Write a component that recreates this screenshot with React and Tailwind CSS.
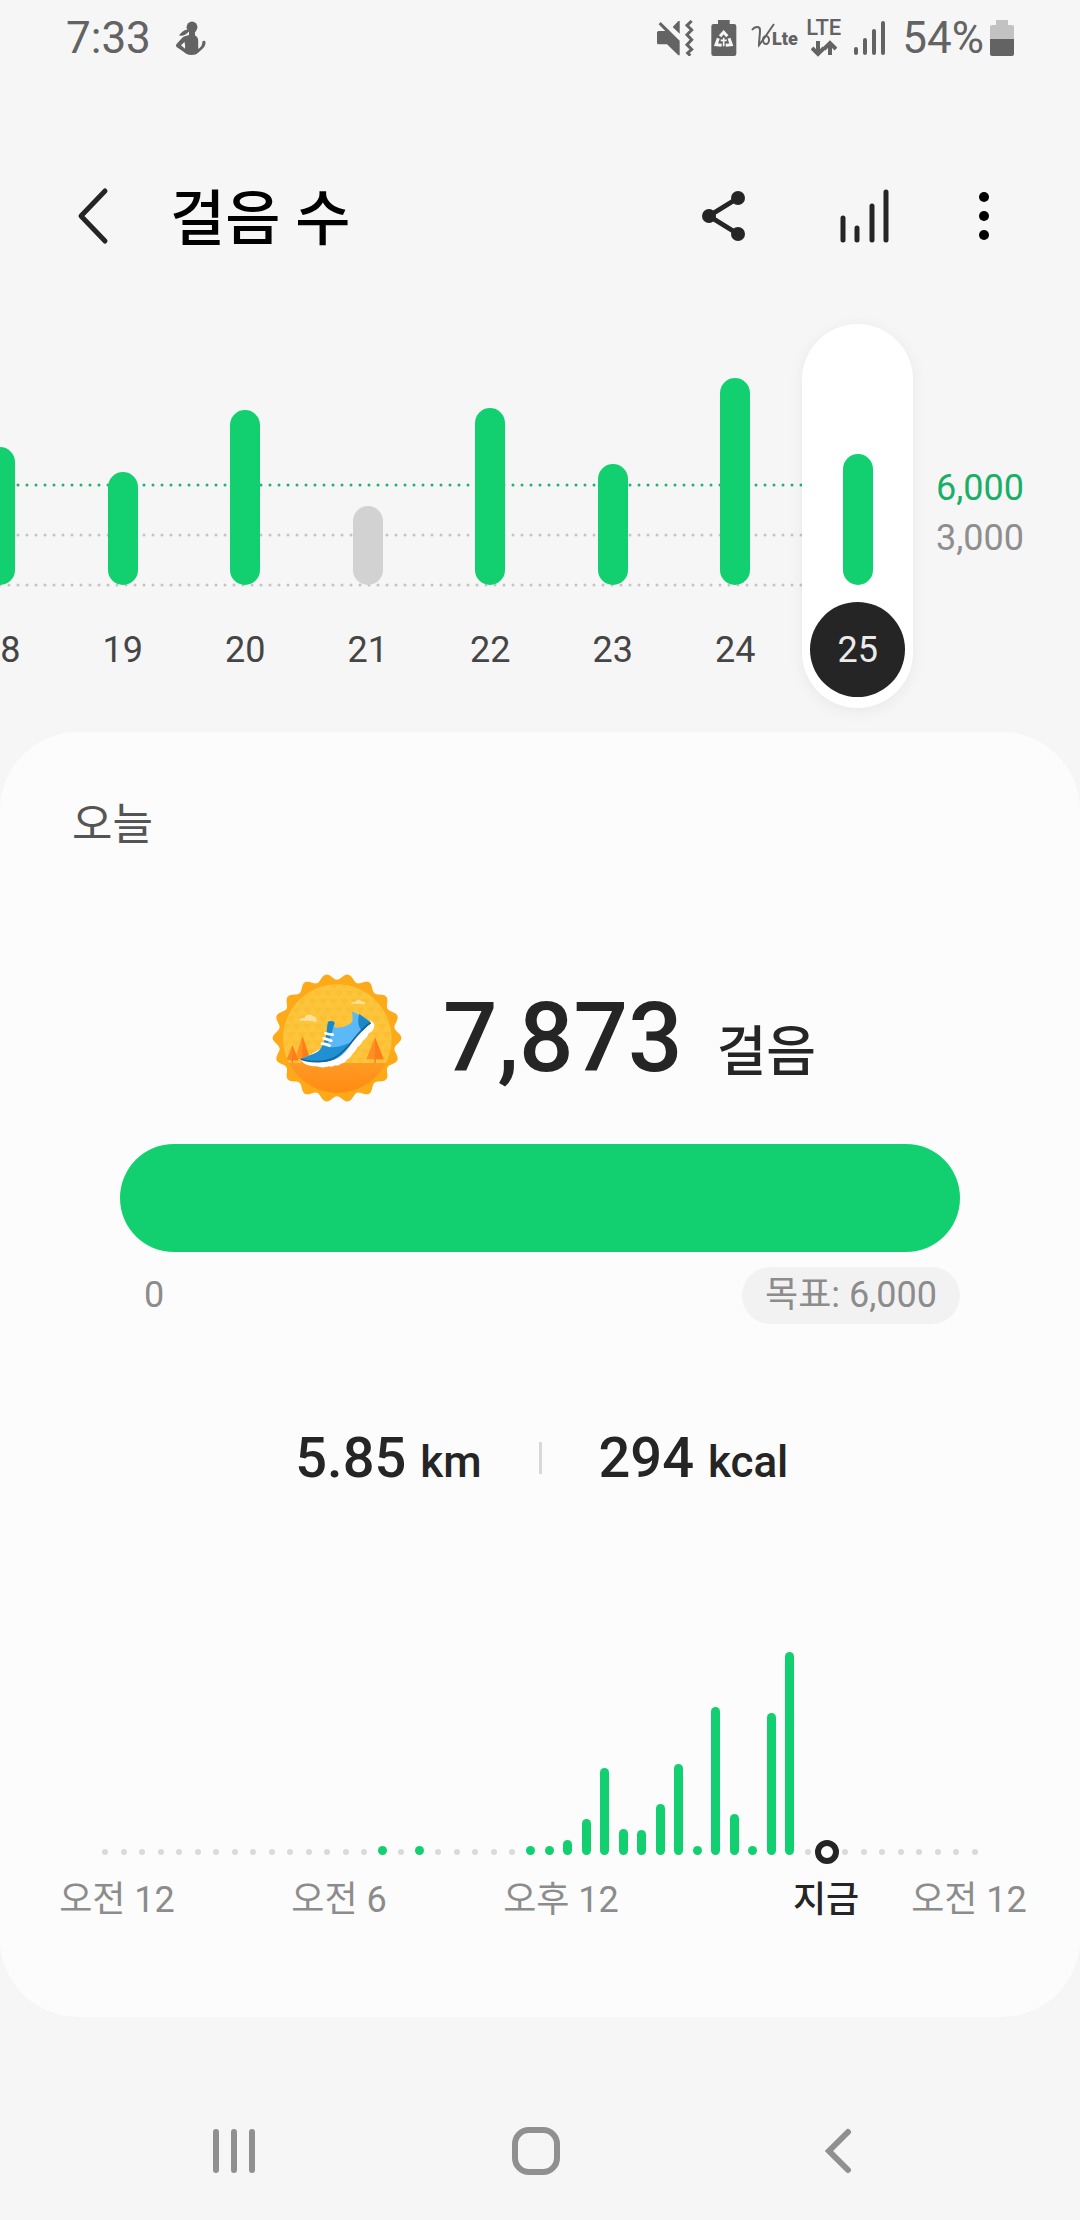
import clsx from "clsx";

const days = [
  { day: 18, height: 138, reached: true },
  { day: 19, height: 113, reached: true },
  { day: 20, height: 175, reached: true },
  { day: 21, height: 79, reached: false },
  { day: 22, height: 177, reached: true },
  { day: 23, height: 121, reached: true },
  { day: 24, height: 207, reached: true },
  { day: 25, height: 131, reached: true },
];
const selectedDay = 25;

// one slot per half hour, only the slots with steps are listed
const slotHeights = {
  15: 9,
  17: 9,
  23: 9,
  24: 9,
  25: 15,
  26: 36,
  27: 87,
  28: 26,
  29: 25,
  30: 51,
  31: 91,
  32: 9,
  33: 148,
  34: 41,
  35: 9,
  36: 142,
  37: 203,
};
const nowSlot = 39;
const slots = Array.from({ length: 48 }, (_, i) => i);

const StatusBar = () => (
  <div className="h-[76px] px-[66px] flex items-center justify-between text-[#636363] text-[44px] leading-none">
    <div className="flex items-center gap-6">
      <span>7:33</span>
      <svg width="32" height="34" viewBox="0 0 32 34" fill="currentColor">
        <ellipse cx="17" cy="6.2" rx="5.4" ry="5.6" />
        <path d="M13 8.500C8 9 6 12 4 14.600c4 .6 8-1 10-4.600z" />
        <path
          fillRule="evenodd"
          d="M14 9h6v5.500c2 1 3.200 2.500 3.200 5V28c2.300-1.500 3.800-3.300 4-5.500l.2-2c.8-1.300 3-1 3.100.5.100 5.500-4 7.500-6 9.500-2 2.500-4.500 3.500-8 3.500-4 0-6-1.200-8-3.200L1.600 26c-.8-1-.8-2 0-3L7 17c2-2 5-2.500 7-3zM9.500 21 6 24.200l4 3.600c.2-2.500.2-4.500-.5-6.800z"
        />
      </svg>
    </div>
    <div className="flex items-center">
      <svg width="37" height="36" viewBox="18 32 111 108" fill="currentColor">
        <path d="M18 70q0-5 5-5h20L23 45l6-7 57 56v44h-4L48 105H23q-5 0-5-5z" />
        <path d="M65 53 82 35h4v38z" />
        <path
          d="m122 35-14 13 14 14-14 14 14 15-14 15 14 14-12 11 8 8"
          fill="none"
          stroke="currentColor"
          strokeWidth="9"
        />
      </svg>
      <svg
        className="ml-[17px]"
        width="26"
        height="36"
        viewBox="181 33 78 108"
        fill="currentColor"
      >
        <path d="M202 33h35v12h13q7 0 7 7v82q0 7-7 7h-61q-7 0-7-7V52q0-7 7-7h13z" />
        <g fill="none" stroke="#f6f6f6" strokeWidth="9">
          <path d="m208 82 11-12 11 12M203 88l-7 19 17 2M235 88l7 19-17 2" />
          <path d="M219 86v26M210 94h18" strokeWidth="5" />
        </g>
      </svg>
      <svg className="ml-[14px]" width="53" height="30" fill="currentColor">
        <path
          d="M1 7c3-4 8-4 8 0 0 5-1 11-1 15C13 16 18 8 23 1"
          fill="none"
          stroke="currentColor"
          strokeWidth="2"
        />
        <ellipse
          cx="15"
          cy="17"
          rx="3"
          ry="4"
          fill="none"
          stroke="currentColor"
          strokeWidth="2"
        />
        <text x="21" y="22" fontSize="18" fontWeight="900">
          Lte
        </text>
      </svg>
      <div className="ml-[2px] flex flex-col items-center gap-1">
        <span className="text-[22px] leading-4 font-medium">LTE</span>
        <svg
          width="26"
          height="17"
          fill="none"
          stroke="currentColor"
          strokeWidth="4"
        >
          <path d="M7 1v13M1 8l6 6 6-6M19 15V3M13 9l6-6 6 6" />
        </svg>
      </div>
      <svg
        className="ml-[13px]"
        width="32"
        height="34"
        stroke="currentColor"
        strokeWidth="4"
        strokeLinecap="round"
      >
        <path d="M2 28v4M11 19v13M20 10v22M29 2v30" />
      </svg>
      <span className="ml-4">54%</span>
      <svg className="ml-[6px]" width="24" height="36">
        <path d="M6 0h12v5h4q2 0 2 2v12H0V7q0-2 2-2h4z" fill="#c2c2c2" />
        <path d="M0 19h24v15q0 2-2 2H2q-2 0-2-2z" fill="currentColor" />
      </svg>
    </div>
  </div>
);

const Header = () => (
  <header className="mt-20 h-[120px] pl-[77px] pr-[86px] flex items-center text-[#252525]">
    <button aria-label="뒤로">
      <svg
        width="32"
        height="58"
        fill="none"
        stroke="currentColor"
        strokeWidth="5"
        strokeLinecap="round"
        strokeLinejoin="round"
      >
        <path d="M28 4 4 29l24 25" />
      </svg>
    </button>
    <h1 className="ml-[61px] pt-2 flex-1 text-[60px] leading-none font-medium text-black">
      걸음 수
    </h1>
    <button aria-label="공유">
      <svg width="44" height="50" fill="currentColor">
        <path
          d="M36 7 7 25l29 18"
          fill="none"
          stroke="currentColor"
          strokeWidth="5"
        />
        <circle cx="36" cy="7" r="7" />
        <circle cx="7" cy="25" r="7" />
        <circle cx="36" cy="43" r="7" />
      </svg>
    </button>
    <button aria-label="차트" className="ml-[94px]">
      <svg
        width="50"
        height="54"
        stroke="currentColor"
        strokeWidth="5"
        strokeLinecap="round"
      >
        <path d="M3 29v22M17 39v12M32 17v34M46 3v48" />
      </svg>
    </button>
    <button aria-label="더보기" className="ml-[84px]">
      <svg width="20" height="50" fill="#000">
        <circle cx="10" cy="6" r="5" />
        <circle cx="10" cy="25" r="5" />
        <circle cx="10" cy="44" r="5" />
      </svg>
    </button>
  </header>
);

const WeekChart = () => (
  <section className="relative mt-12 h-[384px] flex overflow-x-clip text-[36px] leading-none">
    <svg className="absolute inset-0 w-full h-full">
      <g strokeWidth="3" strokeLinecap="round" strokeDasharray="0 9">
        <line x1="0" x2="810" y1="161" y2="161" stroke="#1fb36b" />
        <line x1="0" x2="810" y1="211" y2="211" stroke="#c4c4c4" />
        <line x1="0" x2="810" y1="261" y2="261" stroke="#c4c4c4" />
      </g>
    </svg>
    <div className="relative -ml-[61px] flex-1 grid grid-cols-8 justify-items-center">
      {days.map(({ day, height, reached }) => (
        <button
          key={day}
          className={clsx(
            "w-[111px] h-[384px] pb-[11px] flex flex-col items-center justify-end gap-[17px] rounded-full",
            day === selectedDay && "bg-white shadow-[0_3px_16px_rgba(0,0,0,0.06)]"
          )}
        >
          <span
            className={clsx(
              "w-[30px] rounded-full",
              reached ? "bg-[#12d070]" : "bg-[#d2d2d2]"
            )}
            style={{ height }}
          />
          <span
            className={clsx(
              "size-[95px] rounded-full flex items-center justify-center",
              day === selectedDay
                ? "bg-[#252525] text-[#ebebeb]"
                : "text-[#454545]"
            )}
          >
            {day}
          </span>
        </button>
      ))}
    </div>
    <div className="w-[161px] pt-[139px] pr-[56px] flex flex-col items-end leading-[50px]">
      <span className="text-[#1aaf66]">6,000</span>
      <span className="text-[#8e8e8e]">3,000</span>
    </div>
  </section>
);

// 18 scallops round the rim
const rimPoints = Array.from({ length: 361 }, (_, deg) => {
  const a = (deg * Math.PI) / 180;
  const r = 184 + 9 * Math.cos(18 * a);
  return `${(218 + r * Math.cos(a)).toFixed(1)},${(221 + r * Math.sin(a)).toFixed(1)}`;
}).join(" ");

const Badge = () => (
  <svg width="130" height="130" viewBox="23 26 390 390">
    <defs>
      <clipPath id="badge-face">
        <circle cx="219" cy="223" r="163" />
      </clipPath>
      <pattern
        id="badge-triangles"
        width="32"
        height="50"
        patternUnits="userSpaceOnUse"
      >
        <path d="M2 4h28L16 25zM-14 29h28L0 50zM18 29h28L32 50z" fill="#fbbd2c" />
      </pattern>
      <linearGradient id="badge-ground" x1="0" y1="0" x2="0" y2="1">
        <stop offset="0" stopColor="#ff9a24" />
        <stop offset="1" stopColor="#ff8a10" />
      </linearGradient>
    </defs>
    <polygon points={rimPoints} fill="#fea917" />
    <circle cx="219" cy="223" r="164" fill="#f7a21c" />
    <g clipPath="url(#badge-face)">
      <rect x="50" y="50" width="340" height="345" fill="#fcc53c" />
      <rect
        x="50"
        y="50"
        width="340"
        height="250"
        fill="url(#badge-triangles)"
        opacity="0.7"
      />
      <path
        d="M107 170c-2-8 6-10 13-8 2-11 20-14 26-6 10-2 12 8 10 18-15-5-35-5-49-4z"
        fill="#fee196"
      />
      <path
        d="M260 119c2-6 8-7 12-5 3-10 16-10 18-2 8-1 12 3 15 8-15-2-30-2-45-1z"
        fill="#fee196"
      />
      <path d="m84 242 18 46H66z" fill="#ff8a24" />
      <path d="m114 215 24 70H92z" fill="#ff9324" />
      <path d="m114 215 24 70h-24zM84 242l18 46H84z" fill="#ff7d18" />
      <path d="m332 219 26 66h-52z" fill="#ff8f24" />
      <path d="m332 219 26 66h-26z" fill="#ff7d18" />
      <path d="M82 284h4v16h-4zM112 284h4v16h-4zM330 284h4v16h-4z" fill="#f37a18" />
      <rect x="50" y="296" width="340" height="100" fill="url(#badge-ground)" />
    </g>
    <path
      d="M110 286c4 12 22 19 45 20 15 5 30 4 38 0 8 3 15 1 19-3 9 2 14-1 17-5 9-1 15-6 18-12 9-4 14-10 17-17 8-6 12-13 15-20 9-6 13-13 17-20 11-7 15-14 17-22 10-3 18-14 17-28l-10-10z"
      fill="#fff"
    />
    <path
      d="M110 284c18-9 40-14 53-24 10-9 16-25 22-45 4-17 3-30 6-42 7-5 19-3 20 3l-2 13c22 4 45-5 53-15 6-8 2-22 1-33 20 10 42 18 55 33-18 22-45 43-63 73-18 28-45 46-83 46-25 0-52-2-62-9z"
      fill="#5bb9f7"
    />
    <path
      d="M110 284c18-9 40-14 53-24 7-7 10-13 12-19 20 15 52 7 83-6-20 33-45 56-83 58-25 0-52-2-65-9z"
      fill="#2190d3"
    />
    <path
      d="M191 173c7-5 19-3 20 3-7 18-10 43-22 62h-12c12-23 9-45 14-65zM285 149l33 25c-8 10-16 20-24 27-14-14-15-33-9-52z"
      fill="#1b88c9"
    />
    <path
      d="M110 284c25 11 80 13 110-9 42-28 55-73 99-100"
      fill="none"
      stroke="#15649b"
      strokeWidth="5"
    />
    <g fill="none" stroke="#fff" strokeWidth="8" strokeLinecap="round">
      <path d="M183 207q11 4 22 4M178 222q11 2 23 7M173 238q12 0 23 6" />
    </g>
  </svg>
);

const StepSummary = () => (
  <div>
    <div className="flex items-center justify-center gap-[41px] pl-2">
      <Badge />
      <p className="flex items-baseline gap-[34px] text-[96px] leading-[130px] font-medium">
        <span>7,873</span>
        <span className="text-[54px] leading-none">걸음</span>
      </p>
    </div>
    <div className="mx-[120px] mt-[41px]">
      <div
        role="progressbar"
        aria-label="걸음 수"
        aria-valuenow={6000}
        aria-valuemax={6000}
        className="h-[108px] rounded-full bg-[#12d070]"
      />
      <div className="mt-[15px] flex items-center justify-between pl-6 text-[36px] leading-[57px] text-[#8c8c8c]">
        <span>0</span>
        <span className="px-[23px] rounded-full bg-[#f2f2f2]">목표: 6,000</span>
      </div>
    </div>
    <div className="mt-[102px] grid grid-cols-[1fr_3px_1fr] items-center gap-x-[57px] text-[56px] leading-[64px] font-medium">
      <p className="text-right">
        5.85 <span className="text-[44px] leading-none">km</span>
      </p>
      <span className="h-8 bg-[#d8d8d8]" />
      <p>
        294 <span className="text-[44px] leading-none">kcal</span>
      </p>
    </div>
  </div>
);

const HourChart = () => (
  <div className="mt-[162px]">
    <div className="mx-24 h-[203px] grid grid-cols-[repeat(48,minmax(0,1fr))] items-end justify-items-center">
      {slots.map((slot) => {
        if (slot === nowSlot) {
          return (
            <span
              key={slot}
              className="-mx-1 -mb-[9px] size-6 rounded-full border-6 border-[#252525] bg-white"
            />
          );
        }
        return slotHeights[slot] ? (
          <span
            key={slot}
            className="w-[9px] rounded-full bg-[#12d070]"
            style={{ height: slotHeights[slot] }}
          />
        ) : (
          <span key={slot} className="size-[6px] rounded-full bg-[#dadada]" />
        );
      })}
    </div>
    <div className="mt-[21px] pl-[6px] pr-10 grid grid-cols-[222fr_222fr_222fr_82fr_144fr_142fr] text-center whitespace-nowrap text-[36px] leading-[48px] text-[#8c8c8c]">
      <span>오전 12</span>
      <span>오전 6</span>
      <span>오후 12</span>
      <span className="col-start-5 font-medium text-[#252525]">지금</span>
      <span>오전 12</span>
    </div>
  </div>
);

const NavBar = () => (
  <nav className="h-[136px] mt-[66px] pl-[83px] pr-[91px] grid grid-cols-3 place-items-center text-[#909090]">
    <button aria-label="최근 앱">
      <svg
        width="44"
        height="46"
        stroke="currentColor"
        strokeWidth="6"
        strokeLinecap="round"
      >
        <path d="M4 4v38M22 4v38M40 4v38" />
      </svg>
    </button>
    <button aria-label="홈">
      <svg
        width="48"
        height="48"
        fill="none"
        stroke="currentColor"
        strokeWidth="6"
      >
        <rect x="3" y="3" width="42" height="42" rx="14" />
      </svg>
    </button>
    <button aria-label="이전">
      <svg
        width="28"
        height="46"
        fill="none"
        stroke="currentColor"
        strokeWidth="6"
        strokeLinecap="round"
      >
        <path d="M24 4 5 23l19 19" />
      </svg>
    </button>
  </nav>
);

const App = () => {
  return (
    <div className="min-h-screen bg-[#f6f6f6] font-[Roboto,'Noto_Sans_CJK_KR',sans-serif]">
      <StatusBar />
      <Header />
      <WeekChart />
      <main className="mt-6 pt-[63px] pb-[93px] rounded-[78px] bg-[#fcfcfc] text-[#252525]">
        <h2 className="pl-[72px] mb-[118px] text-[44px] leading-[60px] text-[#555]">
          오늘
        </h2>
        <StepSummary />
        <HourChart />
      </main>
      <NavBar />
    </div>
  );
};
export default App;
